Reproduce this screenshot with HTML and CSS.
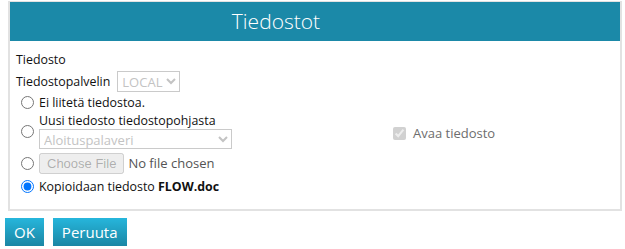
FILE: index.html
```html
<!DOCTYPE html>
<html lang="fi">
<head>
  <meta charset="UTF-8" />
  <title>Tiedostot</title>
  <link rel="stylesheet" href="styles.css">
</head>
<body>
  <div class="panel">
    <div class="panel-header">Tiedostot</div>
    <div class="panel-body">
      <div class="label">Tiedosto</div>
      <div class="server-row">
        <span>Tiedostopalvelin</span>
        <select class="server-select" disabled>
          <option>LOCAL</option>
        </select>
      </div>
      <div class="columns">
        <div class="options">
          <label class="option">
            <input type="radio" name="src" />
            <span>Ei liitetä tiedostoa.</span>
          </label>
          <label class="option">
            <input type="radio" name="src" />
            <span class="option-stack">
              <span>Uusi tiedosto tiedostopohjasta</span>
              <select class="template-select" disabled>
                <option>Aloituspalaveri</option>
              </select>
            </span>
          </label>
          <label class="option">
            <input type="radio" name="src" />
            <input type="file" class="file-input" disabled />
          </label>
          <label class="option">
            <input type="radio" name="src" checked />
            <span>Kopioidaan tiedosto <b>FLOW.doc</b></span>
          </label>
        </div>
        <label class="open-file">
          <input type="checkbox" checked disabled />
          <span>Avaa tiedosto</span>
        </label>
      </div>
    </div>
  </div>

  <div class="actions">
    <button class="btn">OK</button>
    <button class="btn">Peruuta</button>
  </div>
</body>
</html>
```

FILE: styles.css
```css
html, body {
  margin: 0;
  padding: 0;
  background: #ffffff;
  color: #111111;
  font-family: "Open Sans", "Noto Sans", sans-serif;
  font-size: 12.4px;
}

body {
  padding: 1px 3px 0 5px;
}

.panel {
  margin-left: 3px;
  border: 2px solid #e2e2e2;
  border-top-width: 1px;
}

.panel-header {
  height: 39px;
  line-height: 38px;
  background: #1b89a8;
  color: #ffffff;
  text-align: center;
  font-size: 21px;
  font-weight: 300;
  padding-right: 78px;
}

.panel-body {
  padding: 9px 6px 13px;
}

.label {
  line-height: 20px;
}

.server-row {
  display: flex;
  align-items: center;
  gap: 7px;
  height: 22px;
}

.server-select {
  height: 21px;
  font-family: inherit;
  font-size: 13px;
  color: #aaaaaa;
  border: 1px solid #b4b4b4;
  background: #ffffff;
}

.columns {
  display: flex;
  align-items: flex-start;
}

.options {
  width: 373px;
  display: flex;
  flex-direction: column;
}

.option {
  display: flex;
  align-items: center;
  min-height: 20px;
}

.option input[type="radio"] {
  margin: 0 5px 0 5px;
  width: 13px;
  height: 13px;
}

.option-stack {
  display: flex;
  flex-direction: column;
  padding-bottom: 2px;
}

.template-select {
  width: 193px;
  height: 20px;
  font-family: inherit;
  font-size: 13px;
  color: #aaaaaa;
  border: 1px solid #b4b4b4;
  background: #ffffff;
}

.file-input {
  font-family: inherit;
  font-size: 13px;
  margin: 2px 0;
}

.open-file {
  display: flex;
  align-items: center;
  gap: 7px;
  min-height: 20px;
  margin-top: 31px;
  color: #6d6d6d;
  font-size: 13px;
}

.open-file input {
  margin: 0 0 0 4px;
}

.actions {
  display: flex;
  gap: 9px;
  margin-top: 7px;
}

.btn {
  height: 28px;
  padding: 0 9px;
  border: none;
  background: linear-gradient(#26b6dc, #1b86a4);
  color: #ffffff;
  font-family: inherit;
  font-size: 15px;
  cursor: pointer;
}
```
